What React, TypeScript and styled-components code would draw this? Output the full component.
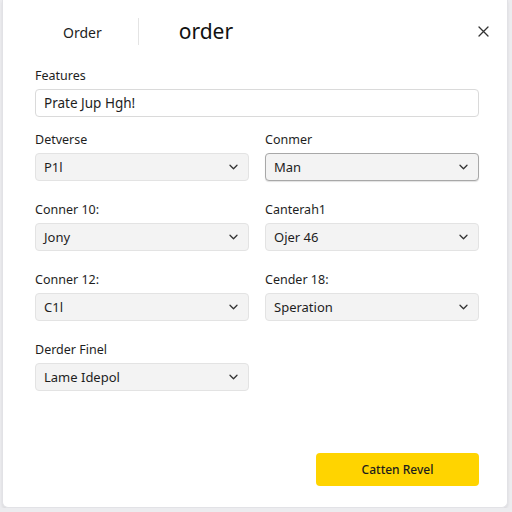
import React from 'react'
import styled, { createGlobalStyle } from 'styled-components'

const GlobalStyle = createGlobalStyle`
  html, body {
    margin: 0;
    padding: 0;
    background: #ececef;
    font-family: 'Noto Sans', 'Open Sans', sans-serif;
    color: #1f1f1f;
  }
`

interface Field {
  label: string
  value: string
  active?: boolean
}

const rows: Field[][] = [
  [
    { label: 'Detverse', value: 'P1l' },
    { label: 'Conmer', value: 'Man', active: true },
  ],
  [
    { label: 'Conner 10:', value: 'Jony' },
    { label: 'Canterah1', value: 'Ojer 46' },
  ],
  [
    { label: 'Conner 12:', value: 'C1l' },
    { label: 'Cender 18:', value: 'Speration' },
  ],
  [{ label: 'Derder Finel', value: 'Lame Idepol' }],
]

const Chevron = () => (
  <svg width='9' height='6' viewBox='0 0 9 6' fill='none'>
    <path d='M1 1.2l3.5 3.5 3.5-3.5' stroke='#333' strokeWidth='1.3' strokeLinecap='round' strokeLinejoin='round' />
  </svg>
)

const CloseIcon = () => (
  <svg width='11' height='11' viewBox='0 0 11 11' fill='none'>
    <path d='M1 1l9 9M10 1l-9 9' stroke='#333' strokeWidth='1.3' strokeLinecap='round' />
  </svg>
)

const App: React.FC = () => {
  return (
    <>
      <GlobalStyle />
      <Card>
        <Header>
          <Tab>Order</Tab>
          <Divider />
          <Title>order</Title>
          <Close aria-label='close'>
            <CloseIcon />
          </Close>
        </Header>
        <Body>
          <Group $tight>
            <Label>Features</Label>
            <Input>Prate Jup Hgh!</Input>
          </Group>
          {rows.map((row, i) => (
            <Row key={i}>
              {row.map((f) => (
                <Group key={f.label}>
                  <Label>{f.label}</Label>
                  <Select $active={f.active}>
                    <span>{f.value}</span>
                    <Chevron />
                  </Select>
                </Group>
              ))}
            </Row>
          ))}
        </Body>
        <Footer>
          <Submit>Catten Revel</Submit>
        </Footer>
      </Card>
    </>
  )
}

export default App

const Card = styled.div`
  box-sizing: border-box;
  width: 506px;
  height: 508px;
  margin: 0 0 0 2px;
  background: #fff;
  border: 1px solid #e2e2e6;
  border-top: none;
  border-radius: 0 0 6px 6px;
  box-shadow: 0 2px 3px rgba(0, 0, 0, 0.08);
  display: flex;
  flex-direction: column;
`

const Header = styled.div`
  display: flex;
  align-items: center;
  height: 62px;
  padding: 0 14px 0 60px;
`

const Tab = styled.div`
  font-size: 14px;
  color: #1d1d1d;
  padding-top: 3px;
`

const Divider = styled.div`
  width: 1px;
  height: 27px;
  background: #e4e4e4;
  margin: 0 40px 0 36px;
`

const Title = styled.div`
  font-size: 21px;
  color: #111;
  flex: 1;
`

const Close = styled.button`
  border: none;
  background: none;
  padding: 4px;
  display: flex;
  cursor: pointer;
`

const Body = styled.div`
  display: flex;
  flex-direction: column;
  gap: 21px;
  padding: 6px 28px 0 32px;
  flex: 1;
`

const Row = styled.div`
  display: grid;
  grid-template-columns: 1fr 1fr;
  column-gap: 16px;
`

const Group = styled.div<{ $tight?: boolean }>`
  display: flex;
  flex-direction: column;
  gap: 5px;
  margin-bottom: ${(p) => (p.$tight ? '-6px' : '0')};
`

const Label = styled.div`
  font-size: 12.5px;
  line-height: 16px;
  color: #1e1e1e;
`

const Input = styled.div`
  box-sizing: border-box;
  height: 28px;
  border: 1px solid #dadada;
  border-radius: 4px;
  padding: 0 8px;
  display: flex;
  align-items: center;
  font-size: 13.5px;
  color: #1e1e1e;
`

const Select = styled.div<{ $active?: boolean }>`
  box-sizing: border-box;
  height: 28px;
  border: 1px solid ${(p) => (p.$active ? '#a8a8a8' : '#e3e3e3')};
  border-radius: 4px;
  background: #f3f3f3;
  padding: 0 10px 0 8px;
  display: flex;
  align-items: center;
  justify-content: space-between;
  font-size: 13px;
  color: #1e1e1e;
  box-shadow: ${(p) => (p.$active ? '0 1px 1px rgba(0,0,0,0.12)' : 'none')};
`

const Footer = styled.div`
  display: flex;
  justify-content: flex-end;
  padding: 0 28px 21px 0;
`

const Submit = styled.button`
  width: 163px;
  height: 33px;
  border: none;
  border-radius: 4px;
  background: #ffd400;
  font-family: 'Noto Sans', 'Open Sans', sans-serif;
  font-size: 12px;
  font-weight: 500;
  color: #1c1c1c;
  cursor: pointer;
`
